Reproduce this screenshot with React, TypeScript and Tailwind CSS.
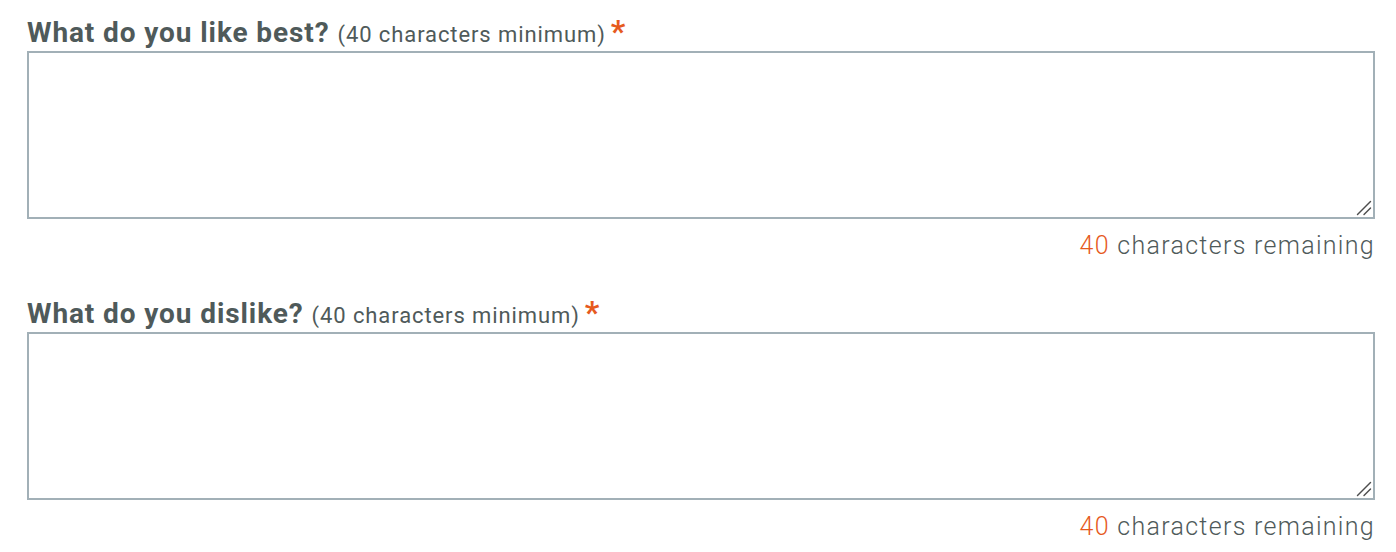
import { useState } from "react";

type Field = { id: string; label: string };

const fields: Field[] = [
  { id: "best", label: "What do you like best?" },
  { id: "dislike", label: "What do you dislike?" },
];

const MIN = 40;

function ResizeGrip() {
  return (
    <svg
      className="absolute right-[3px] bottom-[3px] pointer-events-none"
      width="16"
      height="16"
      viewBox="0 0 16 16"
      fill="none"
      stroke="#4d4d4d"
      strokeWidth="1.4"
      strokeLinecap="round"
    >
      <path d="M14.5 1.5 L1.5 14.5" />
      <path d="M14.5 8 L8 14.5" />
    </svg>
  );
}

function ReviewField({ field }: { field: Field }) {
  const [value, setValue] = useState("");
  const remaining = Math.max(0, MIN - value.length);

  return (
    <div className="mb-[35px]">
      <label
        htmlFor={field.id}
        className="block h-[30px] pt-[2px] leading-[28px] mb-[6px] whitespace-nowrap"
      >
        <span className="text-[28px] font-bold text-[#4f5a5a] tracking-[0.9px]">{field.label}</span>
        <span className="ml-[8px] text-[22px] text-[#4f5a5a] tracking-[0.9px]">({MIN} characters minimum)</span>
        <span className="ml-[5px] text-[32px] font-bold text-[#e65a1e]">*</span>
      </label>
      <div className="relative w-[1348px]">
        <textarea
          id={field.id}
          value={value}
          onChange={(e) => setValue(e.target.value)}
          className="block w-[1348px] h-[168px] border-2 border-[#a2b0b7] bg-white outline-none resize-none"
        />
        <ResizeGrip />
      </div>
      <p className="text-right w-[1348px] mt-[12px] h-[30px] leading-[30px] text-[25px] font-light text-[#4f5a5a] tracking-[1.3px] whitespace-nowrap">
        <span className="text-[#e65a1e]">{remaining}</span> characters remaining
      </p>
    </div>
  );
}

export default function App() {
  return (
    <div className="bg-white w-[1396px] h-[552px] pl-[27px] pt-[15px] font-['Roboto',sans-serif] overflow-hidden">
      {fields.map((f) => (
        <ReviewField key={f.id} field={f} />
      ))}
    </div>
  );
}
